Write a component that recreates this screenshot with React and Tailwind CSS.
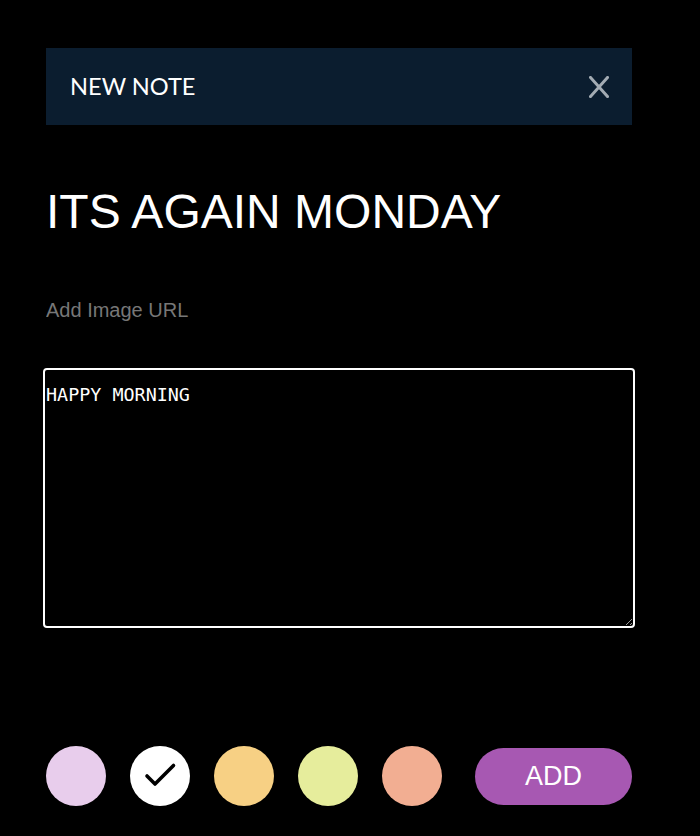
import React, { useState } from 'react';

const colors = ['#e8cdec', '#ffffff', '#f7d084', '#e6ed9c', '#f2ae92'];

function App() {
    const [selected, setSelected] = useState(1);

    return (
        <div className="min-h-[836px] bg-black pt-12 pl-[46px] pr-[68px] font-['Liberation_Sans',Arial,sans-serif]">
            {/* Cabecera */}
            <div className="h-[77px] w-[586px] bg-[#0b1d2f] flex items-center justify-between pl-[24px] pr-[23px]">
                <span className="font-['Lato',sans-serif] text-[23.6px] text-white">NEW NOTE</span>
                <svg width="20" height="22" viewBox="0 0 20 22">
                    <path d="M1.5 1.5 L18.5 20.5 M18.5 1.5 L1.5 20.5" stroke="#a3abb3" strokeWidth="3" strokeLinecap="square" fill="none" />
                </svg>
            </div>

            {/* Titulo */}
            <h1 className="mt-[59px] text-[48px] leading-[56px] text-white">ITS AGAIN MONDAY</h1>

            {/* URL de imagen */}
            <input
                type="text"
                placeholder="Add Image URL"
                className="mt-[58px] block w-[586px] bg-transparent text-[20px] leading-[24px] text-white placeholder:text-[#777777] outline-none"
            />

            {/* Contenido */}
            <textarea
                defaultValue="HAPPY MORNING"
                className="mt-[46px] -ml-[3px] block w-[592px] h-[260px] bg-black border-2 border-white rounded-[4px] pt-[14px] px-px text-[18.4px] leading-[21px] text-white font-['DejaVu_Sans_Mono',monospace] outline-none"
            />

            {/* Colores y boton */}
            <div className="mt-[118px] flex items-center">
                <div className="flex gap-6">
                    {colors.map((c, i) => (
                        <button
                            key={c}
                            onClick={() => setSelected(i)}
                            className="w-[60px] h-[60px] rounded-full flex items-center justify-center"
                            style={{ backgroundColor: c }}
                        >
                            {selected === i && (
                                <svg width="60" height="60" viewBox="0 0 60 60">
                                    <path d="M17 30 L25 38 L43.5 19.5" stroke="#000" strokeWidth="3.6" strokeLinecap="round" strokeLinejoin="round" fill="none" />
                                </svg>
                            )}
                        </button>
                    ))}
                </div>
                <button className="ml-[33px] w-[157px] h-[57px] rounded-full bg-[#a758b2] text-white text-[27px]">
                    ADD
                </button>
            </div>
        </div>
    );
}

export default App;
